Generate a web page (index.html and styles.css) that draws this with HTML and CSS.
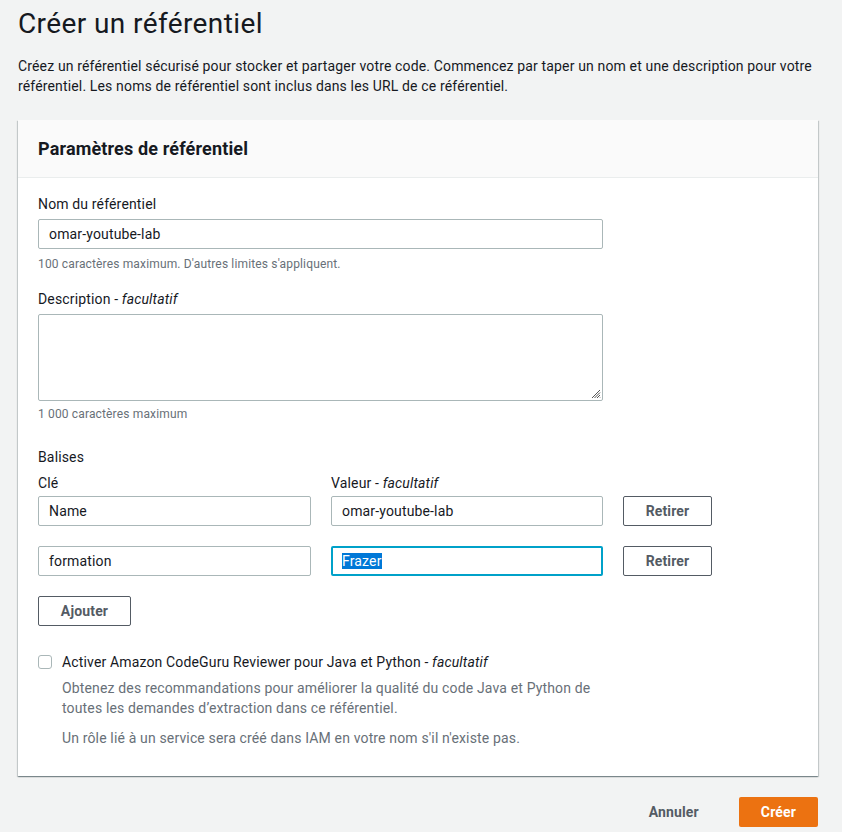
FILE: index.html
```html
<!DOCTYPE html>
<html lang="fr">
<head>
<meta charset="utf-8">
<title>Créer un référentiel</title>
<link rel="stylesheet" href="styles.css">
</head>
<body>
<div class="page">
  <h1 class="title">Créer un référentiel</h1>
  <p class="intro">Créez un référentiel sécurisé pour stocker et partager votre code. Commencez par taper un nom et une description pour votre référentiel. Les noms de référentiel sont inclus dans les URL de ce référentiel.</p>

  <section class="panel">
    <header class="panel-head">Paramètres de référentiel</header>
    <div class="panel-body">
      <div class="field">
        <label class="label">Nom du référentiel</label>
        <div class="input wide">omar-youtube-lab</div>
        <div class="hint">100 caractères maximum. D'autres limites s'appliquent.</div>
      </div>

      <div class="field">
        <label class="label">Description - <i>facultatif</i></label>
        <div class="textarea wide">
          <svg class="grip" width="10" height="10" viewBox="0 0 10 10"><path d="M9 1L1 9M9 3.5L3.5 9M9 6L6 9M9 8.5L8.5 9" stroke="#555" stroke-width="1"/></svg>
        </div>
        <div class="hint short">1 000 caractères maximum</div>
      </div>

      <div class="tags">
        <div class="label">Balises</div>
        <div class="tag-grid">
          <div class="label">Clé</div>
          <div class="label">Valeur - <i>facultatif</i></div>
          <div></div>
          <div class="input">Name</div>
          <div class="input">omar-youtube-lab</div>
          <div class="btn">Retirer</div>
          <div class="input">formation</div>
          <div class="input focus"><span class="sel">Frazer</span></div>
          <div class="btn">Retirer</div>
        </div>
        <div class="btn add">Ajouter</div>
      </div>

      <div class="check-row">
        <span class="checkbox"></span>
        <div class="check-text">
          <div class="check-label">Activer Amazon CodeGuru Reviewer pour Java et Python - <i>facultatif</i></div>
          <p class="check-desc">Obtenez des recommandations pour améliorer la qualité du code Java et Python de toutes les demandes d’extraction dans ce référentiel.</p>
          <p class="check-desc">Un rôle lié à un service sera créé dans IAM en votre nom s'il n'existe pas.</p>
        </div>
      </div>
    </div>
  </section>

  <div class="actions">
    <span class="link-btn">Annuler</span>
    <span class="primary">Créer</span>
  </div>
</div>
</body>
</html>
```

FILE: styles.css
```css
* { box-sizing: border-box; }
html, body { margin: 0; padding: 0; }
body {
  background: #f2f3f3;
  font-family: Roboto, "Liberation Sans", sans-serif;
  color: #16191f;
  font-size: 14px;
  line-height: 20px;
  letter-spacing: 0.15px;
}
.page {
  padding: 4px 24px 6px 18px;
}
.title {
  font-size: 28px;
  font-weight: 400;
  line-height: 40px;
  margin: 0;
  letter-spacing: 0.4px;
}
.intro {
  margin: 12px 0 0;
  width: 800px;
}
.panel {
  margin-top: 24px;
  width: 800px;
  background: #fff;
  box-shadow: 0 1px 1px 0 rgba(0,28,36,.3), 1px 1px 1px 0 rgba(0,28,36,.15), -1px 1px 1px 0 rgba(0,28,36,.15);
}
.panel-head {
  background: #fafafa;
  border-bottom: 1px solid #eaeded;
  padding: 18px 20px 17px;
  font-size: 18px;
  font-weight: 700;
  line-height: 22px;
}
.panel-body {
  padding: 15px 20px 28px;
}
.label { display: block; line-height: 22px; margin-bottom: 4px; }
.field { margin-bottom: 16px; }
.input {
  height: 30px;
  border: 1px solid #aab7b8;
  border-radius: 2px;
  padding: 4px 10px;
  line-height: 20px;
  background: #fff;
}
.wide { width: 565px; }
.textarea {
  height: 87px;
  border: 1px solid #aab7b8;
  border-radius: 2px;
  position: relative;
}
.grip { position: absolute; right: 1px; bottom: 1px; }
.hint {
  font-size: 12px;
  line-height: 16px;
  color: #687078;
  margin-top: 7px;
}
.hint.short { margin-top: 5px; }
.tags { margin-top: 24px; }
.tag-grid {
  display: grid;
  grid-template-columns: 273px 272px 89px;
  column-gap: 20px;
  row-gap: 20px;
  margin-top: 2px;
}
.tag-grid > .label { margin-bottom: -18px; }
.input.focus {
  border: 2px solid #00a1c9;
  padding: 3px 9px;
}
.sel { background: #0078d7; color: #fff; }
.btn {
  height: 30px;
  border: 1px solid #545b64;
  border-radius: 2px;
  color: #545b64;
  font-weight: 700;
  text-align: center;
  line-height: 28px;
  background: #fff;
}
.add { width: 93px; margin-top: 20px; }
.check-row {
  display: flex;
  gap: 10px;
  margin-top: 26px;
}
.checkbox {
  width: 14px;
  height: 14px;
  border: 1px solid #aab7b8;
  border-radius: 3px;
  margin-top: 3px;
  flex: none;
}
.check-desc {
  margin: 6px 0 0;
  color: #687078;
  width: 560px;
}
.check-desc + .check-desc { margin-top: 10px; }
.actions {
  display: flex;
  justify-content: flex-end;
  align-items: center;
  gap: 20px;
  width: 800px;
  margin-top: 21px;
}
.link-btn {
  font-weight: 700;
  color: #545b64;
  padding: 5px 20px;
}
.primary {
  background: #ec7211;
  color: #fff;
  font-weight: 700;
  height: 30px;
  line-height: 30px;
  padding: 0 22px;
  border-radius: 2px;
}
```
